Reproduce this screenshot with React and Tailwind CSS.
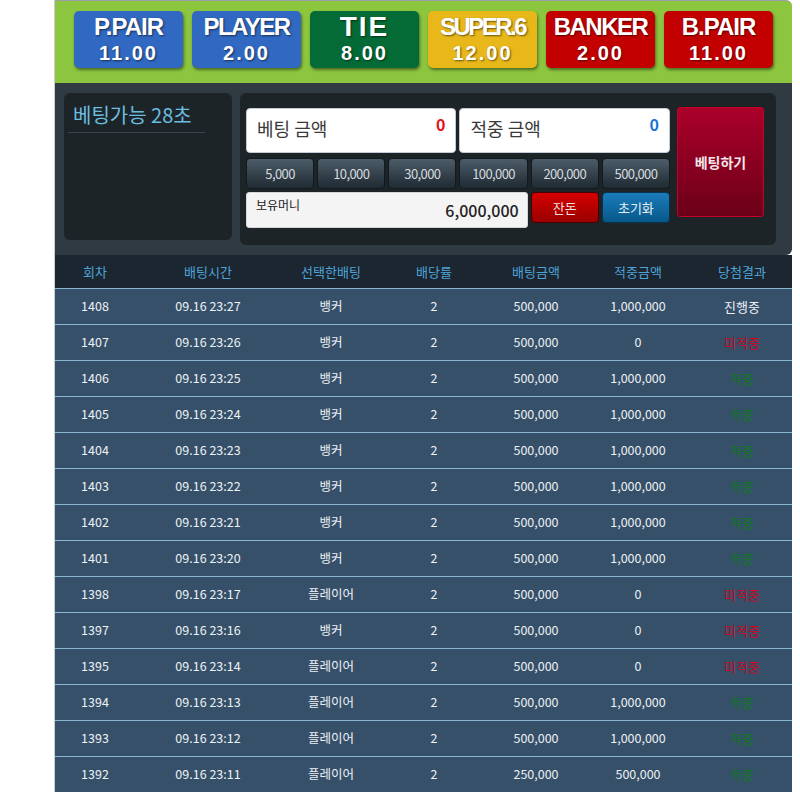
import React from "react";

const bets = [
  { top: "P.PAIR", odds: "11.00", color: "bg-[#3068c2]", track: "tracking-[-1px]", size: "text-[24px]" },
  { top: "PLAYER", odds: "2.00", color: "bg-[#3068c2]", track: "tracking-[-1.5px]", size: "text-[24px]" },
  { top: "TIE", odds: "8.00", color: "bg-[#046b36]", track: "tracking-[2px]", size: "text-[28px]" },
  { top: "SUPER.6", odds: "12.00", color: "bg-[#e8b81b]", track: "tracking-[-2.5px]", size: "text-[24px]" },
  { top: "BANKER", odds: "2.00", color: "bg-[#c30000]", track: "tracking-[-1.5px]", size: "text-[24px]" },
  { top: "B.PAIR", odds: "11.00", color: "bg-[#c30000]", track: "tracking-[-1px]", size: "text-[24px]" },
];

const chips = ["5,000", "10,000", "30,000", "100,000", "200,000", "500,000"];

const rows = [
  ["1408", "09.16 23:27", "뱅커", "2", "500,000", "1,000,000", "진행중"],
  ["1407", "09.16 23:26", "뱅커", "2", "500,000", "0", "미적중"],
  ["1406", "09.16 23:25", "뱅커", "2", "500,000", "1,000,000", "적중"],
  ["1405", "09.16 23:24", "뱅커", "2", "500,000", "1,000,000", "적중"],
  ["1404", "09.16 23:23", "뱅커", "2", "500,000", "1,000,000", "적중"],
  ["1403", "09.16 23:22", "뱅커", "2", "500,000", "1,000,000", "적중"],
  ["1402", "09.16 23:21", "뱅커", "2", "500,000", "1,000,000", "적중"],
  ["1401", "09.16 23:20", "뱅커", "2", "500,000", "1,000,000", "적중"],
  ["1398", "09.16 23:17", "플레이어", "2", "500,000", "0", "미적중"],
  ["1397", "09.16 23:16", "뱅커", "2", "500,000", "0", "미적중"],
  ["1395", "09.16 23:14", "플레이어", "2", "500,000", "0", "미적중"],
  ["1394", "09.16 23:13", "플레이어", "2", "500,000", "1,000,000", "적중"],
  ["1393", "09.16 23:12", "플레이어", "2", "500,000", "1,000,000", "적중"],
  ["1392", "09.16 23:11", "플레이어", "2", "250,000", "500,000", "적중"],
];

const heads = ["회차", "배팅시간", "선택한배팅", "배당률", "배팅금액", "적중금액", "당첨결과"];

const cols = "grid grid-cols-[80px_146px_100px_106px_98px_106px_102px]";

const resultColor = (r) => {
  if (r === "미적중") return "text-[#d0021b]";
  if (r === "적중") return "text-[#0f7a1f]";
  return "text-[#eef1f4]";
};

export default function App() {
  return (
    <div className="min-h-screen bg-white font-['Noto_Sans_CJK_KR',sans-serif]">
      <div className="ml-[54px] w-[738px] border-l border-[#c9cdd1]">
        {/* bet type bar */}
        <div className="h-[83px] bg-[#8cc63f] rounded-tr-[6px] border-t border-[#9aa0a5] flex gap-[9px] pl-[19px] pt-[10px]">
          {bets.map((b) => (
            <div
              key={b.top}
              className={`${b.color} w-[109px] h-[57px] rounded-[5px] shadow-[1px_2px_3px_rgba(0,0,0,0.45)] flex flex-col items-center text-white font-bold font-['Liberation_Sans',Arial,sans-serif] [text-shadow:1px_1px_2px_rgba(0,0,0,0.55)]`}
            >
              <div className={`${b.size} ${b.track} leading-[28px] mt-[2px] h-[28px]`}>{b.top}</div>
              <div className="text-[20px] tracking-[2px] leading-[24px]">{b.odds}</div>
            </div>
          ))}
        </div>

        {/* betting panel */}
        <div className="h-[172px] bg-[#2f3a43] rounded-br-[6px] flex pl-[9px] pt-[10px] gap-[8px]">
          <div className="w-[168px] h-[147px] bg-[#1d2427] rounded-[6px] pt-[8px] px-[4px]">
            <div className="w-[137px] border-b border-[#3a454b] pl-[5px] pb-[3px] text-[20px] leading-[28px] text-[#6bbde0]">
              베팅가능 28초
            </div>
          </div>

          <div className="w-[536px] h-[152px] bg-[#1d2427] rounded-[6px] flex items-start pl-[6px] pt-[15px]">
            <div className="w-[424px] grid grid-cols-6 content-start gap-x-[3px]">
              <div className="col-span-3 h-[45px] bg-white rounded-[4px] border border-[#c5cbd3] flex justify-between px-[10px]">
                <span className="text-[18px] leading-[28px] pt-[5px] text-[#3a3a3a]">베팅 금액</span>
                <span className="text-[16px] font-bold leading-[22px] pt-[4px] text-[#e3101c]">0</span>
              </div>
              <div className="col-span-3 h-[45px] bg-white rounded-[4px] border border-[#c5cbd3] flex justify-between px-[10px]">
                <span className="text-[18px] leading-[28px] pt-[5px] text-[#3a3a3a]">적중 금액</span>
                <span className="text-[16px] font-bold leading-[22px] pt-[4px] text-[#1a74d6]">0</span>
              </div>

              {chips.map((c) => (
                <div
                  key={c}
                  className="mt-[5px] h-[31px] rounded-[4px] border border-[#121a1f] bg-gradient-to-b from-[#4d5d69] to-[#202b33] flex items-center justify-center text-[13px] tracking-[-0.6px] text-[#d6dade]"
                >
                  {c}
                </div>
              ))}

              <div className="col-span-4 mt-[3px] h-[36px] bg-[#f4f4f4] rounded-[3px] border border-[#d4d7da] flex justify-between pl-[9px] pr-[8px]">
                <span className="text-[12px] leading-[16px] pt-[4px] text-[#222]">보유머니</span>
                <span className="self-center text-[16px] font-medium text-[#222]">6,000,000</span>
              </div>
              <div className="mt-[3px] h-[31px] rounded-[4px] border border-[#4a0000] bg-gradient-to-b from-[#d50000] to-[#9a0000] flex items-center justify-center text-[13px] text-[#f2dede]">
                잔돈
              </div>
              <div className="mt-[3px] h-[31px] rounded-[4px] border border-[#06344f] bg-gradient-to-b from-[#1b7cba] to-[#08588a] flex items-center justify-center text-[13px] text-[#e6eff5]">
                초기화
              </div>
            </div>

            <div className="ml-[7px] mt-[-1px] w-[87px] h-[110px] rounded-[3px] border border-[#c2002a] bg-gradient-to-b from-[#ab0029] to-[#6c0018] flex items-center justify-center text-[14px] font-bold text-[#f4e6ea]">
              베팅하기
            </div>
          </div>
        </div>

        {/* history table */}
        <div className={`${cols} h-[33px] bg-[#1b2630] items-center text-[13px] text-[#4fa3d8]`}>
          {heads.map((h) => (
            <div key={h} className="text-center">
              {h}
            </div>
          ))}
        </div>
        {rows.map((r) => (
          <div key={r[0]} className={`${cols} h-[36px] bg-[#36506a] border-t border-[#88b7d4] items-center text-[12.5px] text-[#eef1f4]`}>
            {r.map((cell, i) => (
              <div key={i} className={`text-center ${i === 6 ? "text-[13px] " + resultColor(cell) : ""}`}>
                {cell}
              </div>
            ))}
          </div>
        ))}
      </div>
    </div>
  );
}
